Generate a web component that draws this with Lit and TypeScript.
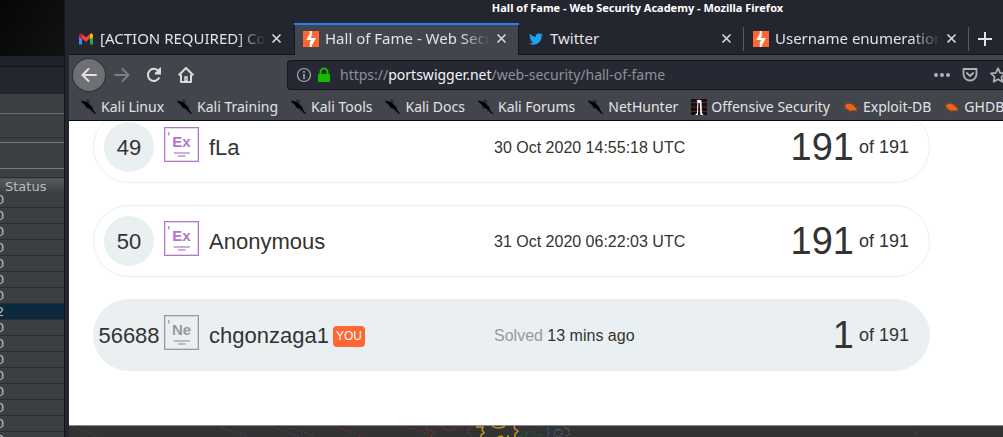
import { LitElement, html, css, svg } from "lit";
import { customElement, property } from "lit/decorators.js";

const closeIcon = svg`<path d="M1.5 1.5l8 8M9.5 1.5l-8 8" stroke="#d6d7d9" stroke-width="1.7" fill="none"/>`;

const gmail = html`<svg width="16" height="16" viewBox="0 0 16 16">
  <path d="M1 4v9.6h3V8z" fill="#4285f4"/><path d="M15 4v9.6h-3V8z" fill="#34a853"/>
  <path d="M1 4.3C1 2.6 3 2 4 3v5L1 6z" fill="#c5221f"/><path d="M15 4.3C15 2.6 13 2 12 3v5l3-2z" fill="#fbbc04"/>
  <path d="M4 3l4 3.2L12 3v4.5L8 10.8 4 7.8z" fill="#ea4335"/></svg>`;
const swigger = html`<svg width="16" height="16" viewBox="0 0 16 16">
  <rect width="16" height="16" fill="#ff6633"/>
  <path d="M6.800 0h2v5L7.600 7H13l-4.200 7.500V16h-2v-4.800L8.200 9H3.300l3.500-6.500z" fill="#fff"/></svg>`;
const twitter = html`<svg width="16" height="14" viewBox="0 0 24 24"><path fill="#1da1f2" d="M24 4.600a10 10 0 0 1-2.800.8 5 5 0 0 0 2.100-2.700c-1 .6-2 1-3.100 1.200a4.900 4.900 0 0 0-8.400 4.500C7.700 8.200 4.100 6.300 1.700 3.200a4.900 4.900 0 0 0 1.500 6.500c-.8 0-1.600-.2-2.200-.6v.1a4.900 4.900 0 0 0 3.900 4.800c-.7.2-1.500.2-2.200.1a4.900 4.900 0 0 0 4.600 3.400A9.900 9.900 0 0 1 0 19.500a14 14 0 0 0 7.500 2.200c9.100 0 14-7.500 14-14v-.6A10 10 0 0 0 24 4.600z"/></svg>`;
const dragon = html`<svg width="16" height="16" viewBox="0 0 16 16">
  <path d="M0 1l2.500 1.200L6 3l1.500 1L9 6l2 1.500 1 3 1.500 2.500 2.500 2-3-.8-2-2.200-2-2L6 9 4.500 7 3.500 5.500 1 3.500z" fill="#000"/>
  <path d="M5 1.500l4.500 2M7 7.500L4.500 9.500M10 10l-.5 2.500M5.500 1l3 .5" stroke="#15171b" stroke-width=".7" fill="none"/></svg>`;
const offsec = html`<svg width="16" height="16" viewBox="0 0 16 16">
  <rect width="16" height="16" fill="#1d0b0d"/><path d="M0 3.500h16M0 8h16M0 12.500h16" stroke="#4d3030"/>
  <path d="M5.500 1.500Q8 0 10.500 1.500L11 14l1.500 2H9.300L8.800 4H7.300L7 16H4l2-2L6.300 3z" fill="#f4f2f2"/></svg>`;
const bug = html`<svg width="16" height="16" viewBox="0 0 16 16">
  <path d="M1.500 6.500L5 4.500l4 1 3 2.500 2 3-3 .5-4 .3L4 10 2.500 8z" fill="#f0640f"/>
  <path d="M4 4.500L2 3M7 4.500V3M10 6l2-.5M12 8.500l3 .5M12 11l2 2M8 11.500L6 13.500M4 9.500L1 10" stroke="#a9501f" stroke-width=".8"/></svg>`;

@customElement("level-badge")
export class LevelBadge extends LitElement {
  @property() code = "";
  static styles = css`
    :host { display: block; width: 35px; height: 35px; color: #b176c8; }
    :host([tone="grey"]) { color: #999; }
    svg { display: block; }
    text { font: bold 15px "Liberation Sans", Arial, sans-serif; }
  `;
  render() {
    return html`<svg width="35" height="35" viewBox="0 0 35 35" fill="none" stroke="currentColor">
      <rect x=".5" y=".5" width="34" height="34"/>
      <rect x="1.500" y="1.500" width="32" height="32" stroke-opacity=".3"/>
      <path d="M4.800 5v3.500M9.700 26h16M14 29h7.500" stroke-width="1.500" stroke-opacity=".8"/>
      <text x="17.500" y="20" text-anchor="middle" fill="currentColor" stroke="none">${this.code}</text>
    </svg>`;
  }
}

@customElement("back-window")
export class BackWindow extends LitElement {
  static styles = css`
    :host { display: block; overflow: hidden; background: #3c3f41; color: #bbb; font: 13px/15px "DejaVu Sans", sans-serif; }
    .desk { height: 56px; background: linear-gradient(120deg, #060607, #111214); }
    .title { height: 10px; background: #1f212b; border-bottom: 1px solid #101118; }
    .menu { height: 27px; background: #23252f; }
    .bar { height: 19px; border-bottom: 1px solid #696b6c; }
    .gap { height: 23px; border-bottom: 1px solid #2b2d2e; }
    .box { height: 25px; margin-top: 4px; border: solid #77797a; border-width: 1px 0; }
    table { width: 100%; border-collapse: collapse; margin-top: 8px; }
    th { padding: 3px 0 0 5px; font-weight: 400; line-height: 11px; text-align: left; background: linear-gradient(#585b5d, #3e4143); border-top: 1px solid #2b2d2e; }
    td { height: 15px; padding: 0; border-bottom: 1px solid #2b2d2e; }
    td span { display: block; margin-left: -4px; }
    .sel { background: #0d293e; }
  `;
  render() {
    return html`<div class="desk"></div><div class="title"></div><div class="menu"></div>
      <div class="bar"></div><div class="gap"></div><div class="box"></div>
      <table><thead><tr><th>Status</th></tr></thead><tbody>
        ${[0, 0, 0, 0, 0, 0, 0, 2, 0, 0, 0, 0, 0, 0, 0, 0].map((n) => html`<tr class=${n ? "sel" : ""}><td><span>${n}</span></td></tr>`)}
      </tbody></table>`;
  }
}

@customElement("browser-chrome")
export class BrowserChrome extends LitElement {
  static styles = css`
    :host { display: block; font: 14px/20px "Noto Sans", sans-serif; color: #e2e3e5; background: #42454c; border-bottom: 1px solid #0c0c0f; }
    svg { display: block; flex: none; }
    button { padding: 0; border: 0; background: none; color: inherit; display: grid; place-items: center; flex: none; }
    .title { height: 23px; box-sizing: border-box; background: #23252f; color: #fff; font-size: 11px; font-weight: 700; line-height: 16px; padding-left: 203px; text-align: center; white-space: nowrap; }
    .tabs { display: flex; height: 32px; background: #23252f; font-size: 15px; }
    .tab { display: flex; align-items: center; flex: 0 0 225px; min-width: 0; box-sizing: border-box; padding: 0 9px; border-bottom: 1px solid #17181e; }
    .tab .name { flex: 1; min-width: 0; margin: 0 2px 0 6px; padding-bottom: 2px; overflow: hidden; white-space: nowrap; }
    .tab.cut .name { mask-image: linear-gradient(90deg, #000 calc(100% - 30px), transparent); }
    .tab.on { background: #42454c; border: 0; padding-bottom: 1px; box-shadow: inset 0 2px #2a7df5, inset 1px 0 #17181e, inset -1px 0 #17181e; }
    .tab .x { width: 16px; height: 16px; margin-right: 1px; }
    .sep { width: 1px; height: 24px; margin: 4px 0 0 -1px; background: #5a5c64; flex: none; }
    .new { flex: 1; border-bottom: 1px solid #17181e; justify-content: start; padding-left: 8px; }
    .nav { display: flex; align-items: center; height: 40px; padding-left: 4px; overflow: hidden; }
    .back { width: 32px; height: 32px; margin-right: 1px; border-radius: 50%; background: #6e7074; box-shadow: 0 0 0 1px #303238; }
    .tool { width: 32px; height: 32px; }
    .url { flex: 1; min-width: 0; box-sizing: border-box; margin-left: 85px; height: 30px; display: flex; align-items: center; gap: 4px; border: 1px solid #16171d; border-right: 0; border-radius: 4px 0 0 4px; background: #262833; padding-left: 8px; overflow: hidden; }
    .addr { flex: 1; min-width: 0; margin-left: 4px; color: #8f9197; white-space: nowrap; }
    .addr b { font-weight: 400; color: #f4f4f6; }
    .acts { display: flex; gap: 12px; margin-right: -3px; }
    .marks { display: flex; gap: 13px; height: 25px; box-sizing: border-box; padding: 0 0 1px 12px; overflow: hidden; white-space: nowrap; }
    a { display: flex; align-items: center; gap: 4px; color: inherit; text-decoration: none; flex: none; }
  `;
  tab(icon: unknown, name: string, cls: string) {
    return html`<div class="tab ${cls}">${icon}<span class="name">${name}</span>
      <button class="x" aria-label="Close tab"><svg width="11" height="11">${closeIcon}</svg></button></div>`;
  }
  render() {
    const marks: [unknown, string][] = [
      [dragon, "Kali Linux"], [dragon, "Kali Training"], [dragon, "Kali Tools"], [dragon, "Kali Docs"],
      [dragon, "Kali Forums"], [dragon, "NetHunter"], [offsec, "Offensive Security"], [bug, "Exploit-DB"], [bug, "GHDB"],
    ];
    return html`
      <div class="title">Hall of Fame - Web Security Academy - Mozilla Firefox</div>
      <div class="tabs">
        ${this.tab(gmail, "[ACTION REQUIRED] Code", "cut")}
        ${this.tab(swigger, "Hall of Fame - Web Security", "cut on")}
        ${this.tab(twitter, "Twitter", "")}
        <span class="sep"></span>
        ${this.tab(swigger, "Username enumeration via", "cut")}
        <span class="sep"></span>
        <button class="new" aria-label="New tab"><svg width="16" height="16"><path d="M8 1v14M1 8h14" stroke="#e2e3e5" stroke-width="2"/></svg></button>
      </div>
      <div class="nav">
        <button class="back" aria-label="Back"><svg width="16" height="16" fill="none" stroke="#e2e3e5" stroke-width="2" stroke-linecap="round"><path d="M15 8H1.500M7.500 2l-6 6 6 6"/></svg></button>
        <button class="tool" aria-label="Forward"><svg width="16" height="16" fill="none" stroke="#7b7d82" stroke-width="2" stroke-linecap="round"><path d="M1 8h13.500M8.500 2l6 6-6 6"/></svg></button>
        <button class="tool" aria-label="Reload"><svg width="16" height="16" fill="none" stroke="#dcddda" stroke-width="2"><path d="M13.300 10.500A6 6 0 1 1 12.500 4"/><path d="M14 1v5.500H9" stroke-linejoin="miter"/><path d="M11 5.500l3-3v3z" fill="#dcddda"/></svg></button>
        <button class="tool" aria-label="Home"><svg width="16" height="16" fill="none" stroke="#dcddda" stroke-width="2"><path d="M.7 8.300L8 1l7.300 7.300M3 7.500V15h10V7.500" stroke-linejoin="round"/><path d="M7 10h2v4H7z" stroke-width="1.500"/></svg></button>
        <div class="url">
          <svg width="16" height="16" fill="none" stroke="#a9abb0"><circle cx="8" cy="8" r="6.500" stroke-width="1.200"/><path d="M8 7v5M8 4v1.700" stroke-width="1.600"/></svg>
          <svg width="16" height="16"><path d="M4.500 8V5a3.500 3.500 0 0 1 7 0v3" fill="none" stroke="#12bc00" stroke-width="2"/><rect x="2" y="7" width="12" height="8" rx="1" fill="#12bc00"/></svg>
          <span class="addr">https://<b>portswigger.net</b>/web-security/hall-of-fame</span>
          <span class="acts">
            <svg width="16" height="16" fill="#b1b2b6"><circle cx="2" cy="8" r="2"/><circle cx="8" cy="8" r="2"/><circle cx="14" cy="8" r="2"/></svg>
            <svg width="16" height="16" fill="none" stroke="#b1b2b6" stroke-width="1.800"><path d="M1.500 2h13v5a6.500 6.500 0 0 1-13 0z" stroke-linejoin="round"/><path d="M4.800 6L8 9l3.200-3" stroke-linecap="round"/></svg>
            <svg width="16" height="16" fill="none" stroke="#b1b2b6" stroke-width="1.700" stroke-linejoin="round"><path d="M8 1.200l2.100 4.600 5 .6-3.700 3.400 1 5L8 12.300l-4.400 2.500 1-5L.9 6.400l5-.6z"/></svg>
          </span>
        </div>
      </div>
      <nav class="marks">${marks.map(([i, t]) => html`<a href="#">${i}${t}</a>`)}</nav>`;
  }
}

@customElement("hall-row")
export class HallRow extends LitElement {
  @property() rank = "";
  @property() code = "";
  @property() name = "";
  @property() score = "";
  @property({ type: Boolean, reflect: true }) you = false;
  static styles = css`
    :host { display: grid; grid-template-columns: 70px 45px 285px 1fr auto; align-items: center; box-sizing: border-box; height: 72px; padding-right: 20px; border: 1px solid #eaeff2; border-radius: 36px; color: #333332; font: 16px/24px "Liberation Sans", Arial, sans-serif; }
    :host([you]) { background: #eaeff2; }
    .rank { justify-self: center; width: 50px; height: 50px; display: flex; justify-content: center; border-radius: 50%; background: #eaeff2; font-size: 22px; line-height: 52px; }
    level-badge { align-self: start; margin-top: 15px; }
    .who { display: flex; align-items: center; gap: 4px; font-size: 22px; line-height: 24px; padding-top: 2px; }
    .tag { background: #ff6633; color: #fff; font-size: 12px; line-height: 21px; padding: 0 3px; border-radius: 4px; }
    ::slotted(span) { padding-top: 2px; }
    .score { display: flex; align-items: center; gap: 5px; font-size: 18px; line-height: 44px; }
    .big { font-size: 38px; }
  `;
  render() {
    return html`<span class="rank">${this.rank}</span>
      <level-badge code=${this.code} tone=${this.you ? "grey" : "purple"}></level-badge>
      <span class="who">${this.name}${this.you ? html`<span class="tag">YOU</span>` : ""}</span>
      <slot></slot>
      <span class="score"><span class="big">${this.score}</span>of 191</span>`;
  }
}

@customElement("app-root")
export class AppRoot extends LitElement {
  static styles = css`
    :host { display: grid; grid-template-columns: 64px 1fr; height: 100vh; overflow: hidden; background: #23252f; }
    .win { min-width: 0; display: flex; flex-direction: column; border-left: 1px solid #14151b; padding-left: 4px; overflow: hidden; }
    browser-chrome { flex: none; }
    main { flex: 1; min-height: 0; background: #fff; padding: 0 73px 54px 24px; display: flex; flex-direction: column; justify-content: flex-end; gap: 22px; overflow: hidden; }
    hall-row { flex: none; }
    .mute { color: #999; }
    footer { height: 11px; flex: none; background: #333; border-top: 1px solid #8b8b8b; overflow: hidden; }
    footer svg { display: block; }
  `;
  render() {
    return html`<back-window></back-window>
      <div class="win">
        <browser-chrome></browser-chrome>
        <main>
          <hall-row rank="49" code="Ex" name="fLa" score="191"><span>30 Oct 2020 14:55:18 UTC</span></hall-row>
          <hall-row rank="50" code="Ex" name="Anonymous" score="191"><span>31 Oct 2020 06:22:03 UTC</span></hall-row>
          <hall-row rank="56688" code="Ne" name="chgonzaga1" score="1" you><span><span class="mute">Solved</span> 13 mins ago</span></hall-row>
        </main>
        <footer><svg width="934" height="11" viewBox="69 426 934 11" fill="none" stroke-width="1">
          <g stroke-dasharray="1 2"><path d="M72 427l26 9M220 427l28 10" stroke="#2e5a86"/><path d="M272 427l28 10" stroke="#3b55a5"/><path d="M290 428l24 8" stroke="#267a5c"/><path d="M334 426l28 11M404 426l28 9" stroke="#b92a2a"/></g>
          <path d="M426 427l1 3 6 1 1 3-3 3M441 426q9 9 17 0M471 427l-3 3 1 4 3 2" stroke="#8e332e" stroke-dasharray="2 1"/>
          <path d="M476 427h7l-1 3 2 3-3 2v2M492 426q6 4 13 0M514 426l1 3 3 2-3 3v3M498 437l3-1 2 1M507 436h2" stroke="#c29a29" stroke-width="1.500"/>
          <path d="M519 437l4-2M526 437v-5h8v5M538 436l3-2 2 2" stroke="#1d674c" stroke-dasharray="2 1"/>
          <path d="M549 427l-2 3 2 3-2 4M556 430h4" stroke="#286aa5" stroke-dasharray="2 1"/><circle cx="558" cy="433" r="4" stroke="#54659c" stroke-dasharray="2 1"/><path d="M565 427l1 2h3v6l-3 1" stroke="#73569c" stroke-dasharray="2 1"/>
          <path d="M915 436l4-5" stroke="#9b3434" stroke-dasharray="2 1"/>
        </svg></footer>
      </div>`;
  }
}
